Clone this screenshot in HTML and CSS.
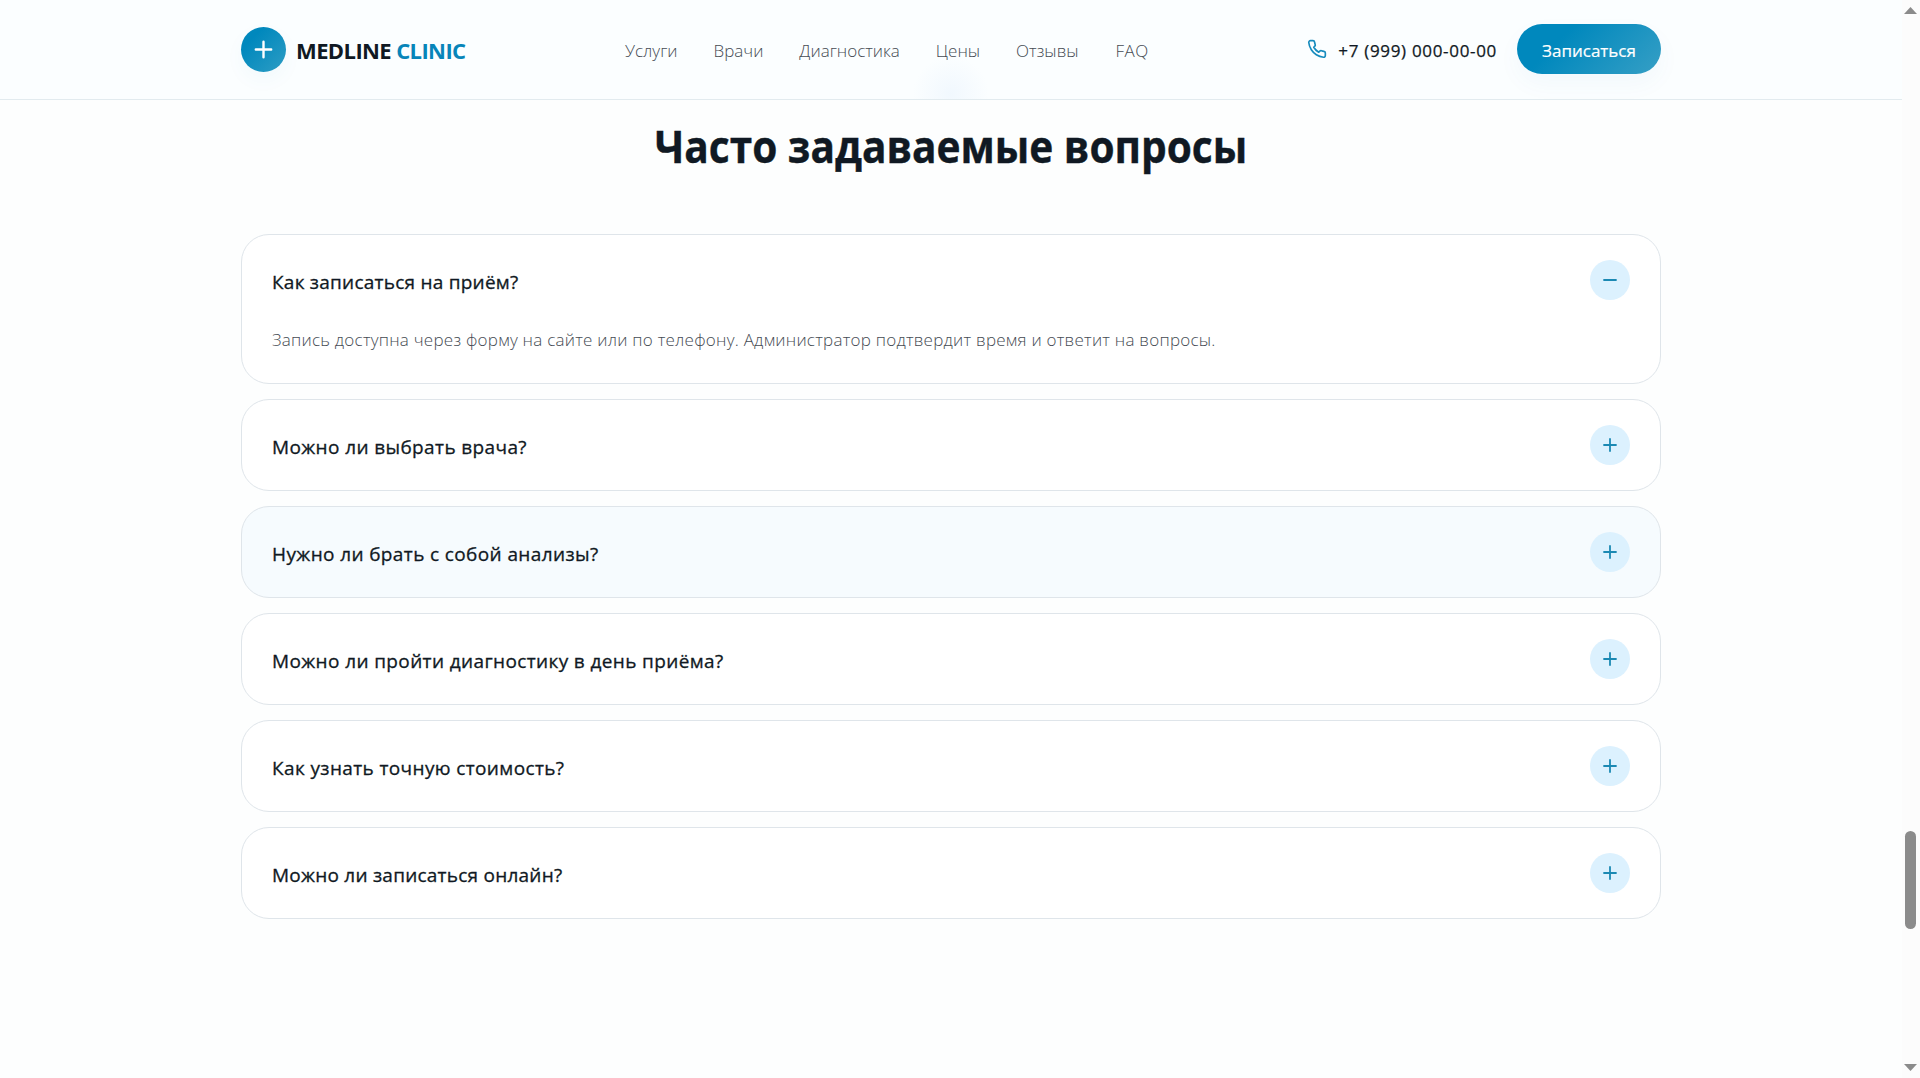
FILE: index.html
```html
<!DOCTYPE html>
<html lang="ru">

<head>
  <meta charset="UTF-8">
  <meta name="viewport" content="width=device-width, initial-scale=1.0">
  <title>Medline Clinic</title>
  <link rel="stylesheet" href="styles.css">
</head>

<body>
  <div class="page">
    <header class="header">
      <div class="container header-inner">
        <a class="logo" href="#">
          <span class="logo-icon">
            <svg width="19" height="19" viewBox="0 0 19 19"><path d="M9.5 1.8v15.4M1.8 9.5h15.4"/></svg>
          </span>
          <span class="logo-text">MEDLINE <span>CLINIC</span></span>
        </a>
        <nav class="nav">
          <a href="#">Услуги</a>
          <a href="#">Врачи</a>
          <a href="#">Диагностика</a>
          <a href="#">Цены</a>
          <a href="#">Отзывы</a>
          <a class="nav-faq" href="#faq">FAQ</a>
        </nav>
        <div class="header-actions">
          <a class="phone" href="tel:+79990000000">
            <svg width="20" height="20" viewBox="0 0 24 24"><path d="M22 16.92v3a2 2 0 0 1-2.18 2 19.79 19.79 0 0 1-8.63-3.07 19.5 19.5 0 0 1-6-6 19.79 19.79 0 0 1-3.07-8.67A2 2 0 0 1 4.11 2h3a2 2 0 0 1 2 1.72 12.84 12.84 0 0 0 .7 2.81 2 2 0 0 1-.45 2.11L8.09 9.91a16 16 0 0 0 6 6l1.27-1.27a2 2 0 0 1 2.11-.45 12.84 12.84 0 0 0 2.81.7A2 2 0 0 1 22 16.92z"/></svg>
            <span>+7 (999) 000-00-00</span>
          </a>
          <a class="btn" href="#">Записаться</a>
        </div>
      </div>
    </header>

    <main class="container faq" id="faq">
      <h2 class="faq-title">Часто задаваемые вопросы</h2>
      <div class="faq-list">
        <div class="faq-item">
          <button class="faq-question"><span class="narrow">Как записаться на приём?</span>
            <span class="faq-icon"><svg width="14" height="14" viewBox="0 0 14 14"><path d="M1 7h12"/></svg></span>
          </button>
          <p class="faq-answer">Запись доступна через форму на сайте или по телефону. Администратор подтвердит время и ответит на вопросы.</p>
        </div>
        <div class="faq-item">
          <button class="faq-question"><span>Можно ли выбрать врача?</span>
            <span class="faq-icon"><svg width="14" height="14" viewBox="0 0 14 14"><path d="M7 1v12M1 7h12"/></svg></span>
          </button>
        </div>
        <div class="faq-item faq-item-hover">
          <button class="faq-question"><span>Нужно ли брать с собой анализы?</span>
            <span class="faq-icon"><svg width="14" height="14" viewBox="0 0 14 14"><path d="M7 1v12M1 7h12"/></svg></span>
          </button>
        </div>
        <div class="faq-item">
          <button class="faq-question"><span>Можно ли пройти диагностику в день приёма?</span>
            <span class="faq-icon"><svg width="14" height="14" viewBox="0 0 14 14"><path d="M7 1v12M1 7h12"/></svg></span>
          </button>
        </div>
        <div class="faq-item">
          <button class="faq-question"><span>Как узнать точную стоимость?</span>
            <span class="faq-icon"><svg width="14" height="14" viewBox="0 0 14 14"><path d="M7 1v12M1 7h12"/></svg></span>
          </button>
        </div>
        <div class="faq-item">
          <button class="faq-question"><span class="narrow">Можно ли записаться онлайн?</span>
            <span class="faq-icon"><svg width="14" height="14" viewBox="0 0 14 14"><path d="M7 1v12M1 7h12"/></svg></span>
          </button>
        </div>
      </div>
    </main>
  </div>

  <div class="scrollbar">
    <svg width="13" height="7" viewBox="0 0 13 7"><path d="M0 7L6.5 0L13 7z"/></svg>
    <div class="scrollbar-thumb"></div>
    <svg class="scrollbar-down" width="13" height="7" viewBox="0 0 13 7"><path d="M0 0L6.5 7L13 0z"/></svg>
  </div>
</body>

</html>
```

FILE: styles.css
```css
* {
  box-sizing: border-box;
}

body {
  margin: 0;
  height: 100vh;
  display: flex;
  overflow: hidden;
  font-family: 'Segoe UI', 'Open Sans', 'Noto Sans', sans-serif;
  color: #101923;
  background: #fdfefe;
}

a {
  color: inherit;
  text-decoration: none;
}

svg {
  display: block;
  fill: none;
  stroke-linecap: round;
  stroke-linejoin: round;
}

.page {
  flex: 1;
  min-width: 0;
}

.container {
  width: 1420px;
  margin: 0 auto;
}

/* header */
.header {
  height: 100px;
  border-bottom: 1px solid #e2ebef;
  background: radial-gradient(ellipse 38px 38px at 951px 94px, #f1f8fe, #fbfeff) #fbfeff;
}

.header-inner {
  height: 99px;
  display: flex;
  align-items: center;
  justify-content: space-between;
}

.logo {
  width: 384px;
  display: flex;
  align-items: center;
  gap: 10px;
}

.logo-icon {
  width: 45px;
  height: 45px;
  display: flex;
  align-items: center;
  justify-content: center;
  border-radius: 50%;
  background: linear-gradient(135deg, #0088bd 25%, #2e9dc4);
  box-shadow: 0 8px 20px rgba(0, 136, 190, 0.04);
}

.logo-icon svg {
  stroke: #fff;
  stroke-width: 2.4;
}

.logo-text {
  font-size: 22px;
  font-weight: 700;
  letter-spacing: -0.6px;
  padding-top: 1px;
  white-space: nowrap;
}

.logo-text span {
  color: #0785b9;
}

.nav {
  flex: 1;
  display: flex;
  gap: 36px;
  padding-top: 2px;
  font-size: 17px;
  color: #454b53;
  font-weight: 300;
  white-space: nowrap;
}

.nav-faq {
  letter-spacing: 0.5px;
  margin-left: 1px;
}

.header-actions {
  display: flex;
  align-items: center;
  gap: 20px;
  padding-bottom: 1px;
}

.phone {
  display: flex;
  align-items: center;
  gap: 11px;
  font-size: 17px;
  font-weight: 500;
  letter-spacing: 0.68px;
  -webkit-text-stroke: 0.25px;
  white-space: nowrap;
}

.phone svg {
  stroke: #168bbd;
  stroke-width: 2;
}

.phone span {
  padding-top: 3px;
}

.btn {
  width: 144px;
  height: 50px;
  padding-top: 3px;
  display: flex;
  align-items: center;
  justify-content: center;
  border-radius: 25px;
  color: #fff;
  font-size: 17px;
  font-weight: 500;
  -webkit-text-stroke: 0.2px;
  background: linear-gradient(135deg, #0088bd 30%, #369fc5);
  box-shadow: 0 10px 24px rgba(0, 110, 190, 0.04);
}

/* faq */
.faq-title {
  margin: 0;
  padding-top: 15px;
  height: 134px;
  font-size: 44px;
  line-height: 62px;
  font-weight: 700;
  -webkit-text-stroke: 0.4px;
  text-align: center;
  white-space: nowrap;
  transform: scaleX(0.923);
}

.faq-list {
  display: flex;
  flex-direction: column;
  gap: 15px;
}

.faq-item {
  border: 1px solid #dfe5ea;
  border-radius: 28px;
  background: #fff;
}

.faq-item-hover {
  background: #f6fbfe;
}

.faq-question {
  width: 100%;
  height: 90px;
  padding: 0 30px;
  display: flex;
  align-items: center;
  justify-content: space-between;
  border: none;
  background: none;
  font: inherit;
  font-size: 19px;
  font-weight: 500;
  letter-spacing: 0.38px;
  -webkit-text-stroke: 0.3px;
  color: inherit;
  cursor: pointer;
}

.faq-question > span:first-child {
  padding-top: 3px;
}

.faq-question .narrow {
  letter-spacing: 0.24px;
}

.faq-icon {
  width: 40px;
  height: 40px;
  display: flex;
  align-items: center;
  justify-content: center;
  border-radius: 50%;
  background: #dcf1fe;
}

.faq-icon svg {
  stroke: #1b89b3;
  stroke-width: 1.8;
}

.faq-answer {
  margin: 0;
  height: 58px;
  padding: 0 30px;
  font-size: 17px;
  line-height: 30px;
  font-weight: 300;
  letter-spacing: 0.245px;
  color: #454b53;
  white-space: nowrap;
}

/* scrollbar */
.scrollbar {
  width: 18px;
  height: 100%;
  padding: 7px 1px 7px 0;
  display: flex;
  flex-direction: column;
  align-items: center;
  background: #fcfcfc;
}

.scrollbar svg {
  fill: #8b8b8b;
}

.scrollbar-thumb {
  width: 11px;
  height: 98px;
  margin-top: 817px;
  border-radius: 6px;
  background: #8b8b8b;
}

.scrollbar-down {
  margin-top: auto;
}
```
